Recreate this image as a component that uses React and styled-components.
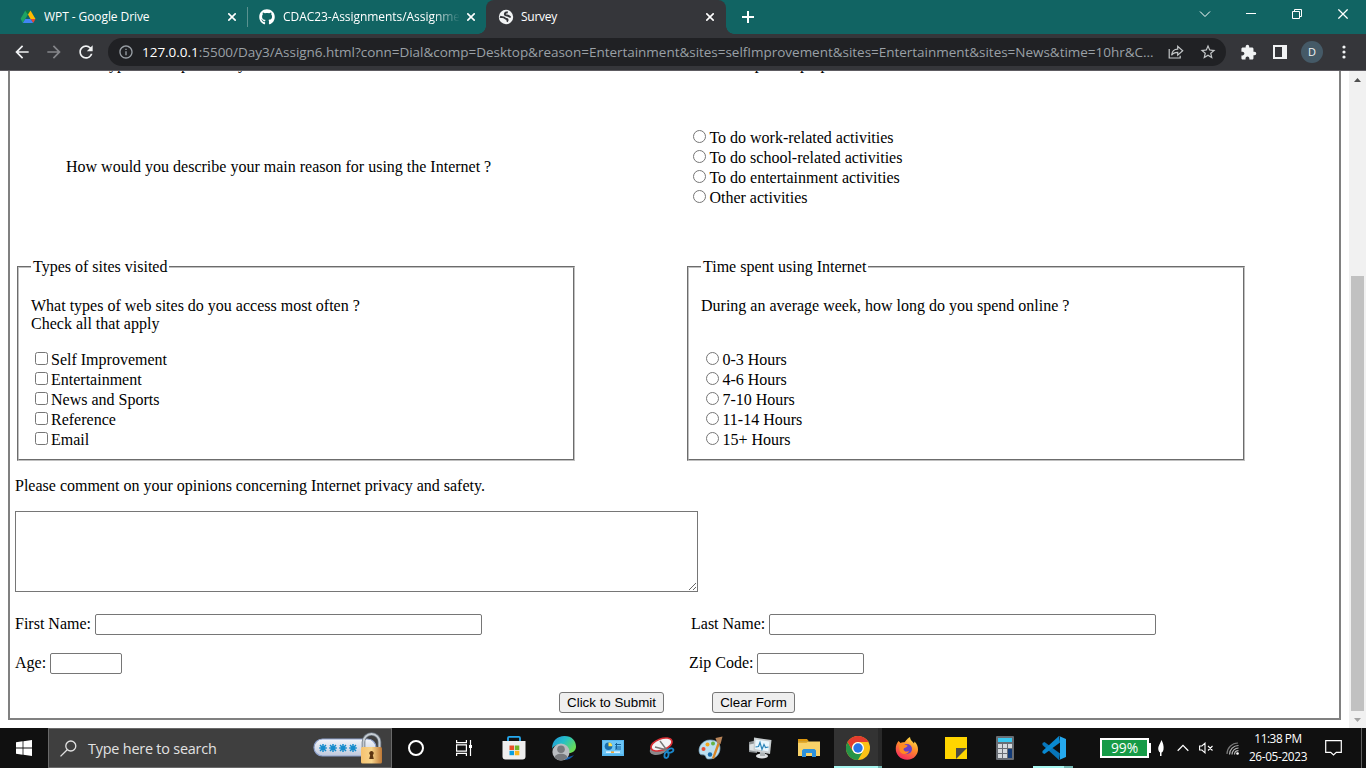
import React from "react";
import styled, { createGlobalStyle } from "styled-components";
import { FaGithub } from "react-icons/fa";
import { MdArrowBack, MdArrowForward, MdRefresh, MdExtension, MdStarBorder, MdInfoOutline } from "react-icons/md";

const Global = createGlobalStyle`
  * { box-sizing: border-box; }
  body { margin: 0; background: #fff; overflow: hidden; }
  svg { display: block; flex: none; }
`;

const ui = `"Open Sans", "Noto Sans", sans-serif`;

const Screen = styled.div`
  width: 1366px;
  height: 768px;
  display: flex;
  flex-direction: column;
  overflow: hidden;
`;

/* ---------- browser tabs ---------- */
const TabStrip = styled.div`
  height: 34px;
  flex: none;
  display: flex;
  background: #116463;
  color: #fff;
  font: 12px/34px ${ui};
`;
const Tab = styled.div`
  width: ${(p) => p.$w}px;
  padding: 0 ${(p) => p.$right}px 0 ${(p) => p.$left}px;
  display: flex;
  align-items: center;
  gap: ${(p) => p.$gap || 8}px;
  position: relative;
  background: ${(p) => (p.$active ? "#35363a" : "transparent")};
  border-radius: 8px 8px 0 0;
  &::before, &::after {
    content: ${(p) => (p.$active ? '""' : "none")};
    position: absolute;
    bottom: 0;
    width: 8px;
    height: 8px;
  }
  &::before { left: -8px; background: radial-gradient(circle at 0 0, transparent 7.5px, #35363a 8px); }
  &::after { right: -8px; background: radial-gradient(circle at 100% 0, transparent 7.5px, #35363a 8px); }
`;
const TabTitle = styled.span`
  flex: 1;
  min-width: 0;
  overflow: hidden;
  white-space: nowrap;
  letter-spacing: ${(p) => p.$ls || 0}px;
  ${(p) => p.$fade && "mask-image: linear-gradient(90deg, #000 150px, transparent 177px);"}
`;
const TabDivider = styled.i`
  width: 1px;
  height: 20px;
  margin: 7px 0;
  background: #5a9290;
`;
const NewTab = styled.div`
  padding: 11px 0 0 16px;
  flex: 1;
`;
const WindowControls = styled.div`
  display: flex;
  width: 184px;
  height: 28px;
`;
const WindowButton = styled.div`
  width: 46px;
  display: grid;
  place-items: center;
`;

/* ---------- toolbar ---------- */
const Toolbar = styled.div`
  height: 37px;
  flex: none;
  display: flex;
  align-items: center;
  padding: 0 6px 0 12px;
  background: #35363a;
  border-bottom: 1px solid #5d5b61;
  color: #f1f3f4;
`;
const NavButton = styled.div`
  width: 20px;
  flex: none;
  margin-right: 12px;
  display: grid;
  place-items: center;
  color: ${(p) => (p.$dim ? "#85868a" : "#f1f3f4")};
`;
const AddressBar = styled.div`
  width: 1118px;
  flex: none;
  height: 28px;
  margin-right: 6px;
  border-radius: 14px;
  background: #202124;
  display: flex;
  align-items: center;
  padding: 0 2px 0 10px;
  color: #c4c7c9;
`;
const Url = styled.span`
  width: 1018px;
  flex: none;
  margin-left: 8px;
  white-space: nowrap;
  overflow: hidden;
  color: #9aa0a6;
  font: 13.5px/26px ${ui};
  letter-spacing: -0.026px;
  b { font-weight: 400; color: #fff; }
`;
const ToolItem = styled.div`
  width: 32px;
  flex: none;
  display: grid;
  place-items: center;
`;
const Avatar = styled.div`
  width: 22px;
  height: 22px;
  border-radius: 50%;
  background: #455a67;
  text-align: center;
  font: 11px/22px ${ui};
`;

/* ---------- page ---------- */
const Viewport = styled.div`
  height: 657px;
  flex: none;
  display: flex;
  overflow: hidden;
  padding-left: 8px;
  background: #fff;
`;
const Form = styled.form`
  width: 1333px;
  height: 649px;
  margin-right: 8px;
  padding: 0 5px;
  border: 2px solid gray;
  border-top: 0;
  color: #000;
  font: 16px/18px "Liberation Serif", serif;
  input, button, textarea { font: 13.333px "Liberation Sans", sans-serif; }
`;
const Row = styled.div`
  display: flex;
  height: ${(p) => p.$h}px;
  margin-top: ${(p) => p.$mt || 0}px;
`;
const Question = styled.div`
  width: ${(p) => p.$w || 627}px;
  flex: none;
  align-self: ${(p) => p.$align || "flex-start"};
  padding-left: 51px;
  padding-bottom: ${(p) => (p.$align ? 2 : 0)}px;
`;
const Options = styled.div`
  padding-left: ${(p) => p.$pad}px;
  display: flex;
  flex-direction: ${(p) => (p.$inline ? "row" : "column")};
  gap: ${(p) => (p.$inline ? 4 : 0)}px;
  margin-top: ${(p) => (p.$inline ? -1 : 0)}px;
`;
const Option = styled.label`
  height: 20px;
  display: flex;
  align-items: flex-start;
  line-height: 20px;
  gap: ${(p) => p.$gap}px;
  input { width: 13px; height: 13px; margin: 2px 0 0; flex: none; }
`;
const Group = styled.fieldset`
  width: 558px;
  height: 203px;
  margin: 0 ${(p) => p.$mr || 0}px 0 2px;
  padding: 5.6px 12px 8px;
  border: 2px groove #c0c0c0;
  min-width: 0;
  legend { padding: 0 2px; }
  p { margin: 15px 0 17px; height: 36px; }
`;
const Comment = styled.textarea`
  display: block;
  width: 683px;
  height: 81px;
  margin: 16px 0 0;
  border: 1px solid #767676;
`;
const Field = styled.label`
  width: ${(p) => p.$w || 600}px;
  display: flex;
  gap: 4px;
  line-height: 20px;
  white-space: nowrap;
  input {
    width: ${(p) => p.$input}px;
    height: 21px;
    border: 1px solid #767676;
    border-radius: 2px;
    margin: 0;
    padding: 1px 2px;
  }
`;
const Button = styled.button`
  width: ${(p) => p.$w}px;
  height: 21px;
  padding: 0;
  white-space: nowrap;
  border: 1px solid #767676;
  border-radius: 3px;
  background: #efefef;
  color: #000;
`;
const Buttons = styled(Row)`
  gap: 48px;
  padding-left: 544px;
`;
const Scrollbar = styled.div`
  width: 17px;
  height: 657px;
  display: flex;
  flex-direction: column;
  align-items: center;
  background: #f1f1f1;
`;
const ScrollArrow = styled.div`
  height: 17px;
  display: grid;
  place-items: center;
`;
const Thumb = styled.div`
  width: 13px;
  height: 435px;
  margin-top: 188px;
  background: #c1c1c1;
`;

/* ---------- taskbar ---------- */
const Taskbar = styled.div`
  height: 40px;
  flex: none;
  display: flex;
  background: #101010;
  color: #fff;
  font-family: ${ui};
`;
const Slot = styled.div`
  width: ${(p) => p.$w || 49}px;
  height: 40px;
  flex: none;
  display: grid;
  place-items: center;
`;
const SearchBox = styled.div`
  width: 344px;
  height: 40px;
  flex: none;
  display: flex;
  align-items: center;
  padding: 0 8px 0 11px;
  background: #3f3f3f;
  border: 1px solid #696969;
  color: #e2e2e2;
  font-size: 14.4px;
  letter-spacing: -0.2px;
  span { margin: 0 0 0 11px; flex: 1; }
`;
const RunningSlot = styled(Slot)`
  background: ${(p) => (p.$active ? "linear-gradient(90deg, #333 44px, #292929 44px)" : "transparent")};
  position: relative;
  &::after {
    content: "";
    position: absolute;
    left: ${(p) => (p.$active ? 0 : 4)}px;
    right: ${(p) => (p.$active ? 0 : 5)}px;
    bottom: 0;
    height: 2px;
    background: linear-gradient(90deg, #a6f5ef ${(p) => (p.$active ? 44 : 31)}px, #72b5b0 ${(p) => (p.$active ? 44 : 31)}px);
  }
`;
const Battery = styled.div`
  width: 49px;
  flex: none;
  height: 20px;
  margin: 10px 0 0;
  border: 2px solid #fff;
  background: #169b47;
  position: relative;
  text-align: center;
  font-size: 13.8px;
  line-height: 16px;
  &::after {
    content: "";
    position: absolute;
    right: -4px;
    top: 3px;
    width: 2px;
    height: 10px;
    background: #fff;
  }
`;
const Clock = styled.div`
  width: 66px;
  flex: none;
  padding-top: 1px;
  text-align: center;
  font-size: 11.8px;
  line-height: 18px;
  white-space: nowrap;
  div:first-child { letter-spacing: -0.45px; }
  div:last-child { letter-spacing: -0.35px; }
`;
const DesktopEdge = styled.i`
  width: 1px;
  margin-left: 6px;
  background: #5f5f5f;
`;

const Cross = ({ s = 8, w = 1.6 }) => (
  <svg width={s} height={s} viewBox="0 0 8 8" stroke="#fff" strokeWidth={w}><path d="M.3.3l7.4 7.4M7.7.3L.3 7.7" /></svg>
);

const GlobeIcon = () => (
  <svg width="16" height="16" viewBox="0 0 16 16">
    <circle cx="8" cy="8" r="7.2" fill="#f1f3f4" />
    <path d="M9.8 3.200C8.500 3.200 7.200 3.500 6.900 4.700c-.300 1.300.700 1.700 2.100 1.800 1.800.100 2.300 1.300 3.700 1.600M2 7.600c1.200.700 3 .300 4 .900 1 .600 1.200 1.300 2.600 1.500 1.300.200 1.300 1.400.300 2.700" fill="none" stroke="#35363a" strokeWidth="1.900" />
  </svg>
);

const DriveIcon = () => (
  <svg width="16" height="16" viewBox="0 0 16 16">
    <path d="M5.3 1.4L.6 9.8l2.2 4.2L8 5.5z" fill="#1ea362" />
    <path d="M5.3 1.4h5.2L8 5.6z" fill="#117a3c" />
    <path d="M10.5 1.4l5 8.7h-5L8 5.5z" fill="#ffba00" />
    <path d="M10.5 10.1h5L13.2 14z" fill="#ea4335" />
    <path d="M5.3 10.1h5.2l2.7 3.9H2.8z" fill="#4285f4" />
  </svg>
);

const ShareIcon = () => (
  <svg width="16" height="16" viewBox="0 0 16 16" fill="none" stroke="#c4c7c9" strokeWidth="1.2">
    <path d="M1.2 5v9h11v-2.2M3.6 11.2c.5-4.2 2.7-6 6.1-6V2.3l5 4.5-5 4.4V8.3c-2.7 0-4.7.7-6.1 2.9z" />
  </svg>
);

const LockArt = () => (
  <svg width="70" height="34" viewBox="0 0 70 34">
    <defs>
      <linearGradient id="pill" x2="0" y2="1"><stop stopColor="#f4f6fa" /><stop offset="1" stopColor="#bfc9dd" /></linearGradient>
      <linearGradient id="lock"><stop stopColor="#f5c270" /><stop offset=".5" stopColor="#f8d48a" /><stop offset="1" stopColor="#bd7836" /></linearGradient>
    </defs>
    <rect x="1" y="8" width="62" height="17" rx="8.5" fill="url(#pill)" stroke="#8ca0cb" strokeWidth="1.2" />
    {[10, 20, 30, 40].map((x) => (
      <path key={x} d={`M${x} 13v8M${x - 3} 14l6 6M${x - 3} 20l6-6M${x - 3.8} 17h7.6`} stroke="#168ccc" strokeWidth="1.5" />
    ))}
    <path d="M50.5 17v-6a8 8 0 0 1 16 0v6" fill="none" stroke="#68717c" strokeWidth="3.6" />
    <path d="M50.5 17v-6a8 8 0 0 1 16 0v6" fill="none" stroke="#c5ccd2" strokeWidth="2" />
    <rect x="48" y="16" width="21" height="16.500" rx="1.5" fill="url(#lock)" />
    <path d="M58.5 20a2.2 2.2 0 0 1 1.3 4l1 4h-4.6l1-4a2.2 2.2 0 0 1 1.3-4z" fill="#5b3412" />
  </svg>
);

const TaskViewIcon = () => (
  <svg width="18" height="16" viewBox="0 0 18 16" fill="none" stroke="#fff" strokeWidth="1.2">
    <path d="M1.6 0v2.6h9.8V0M1.6 16v-2.6h9.8V16M1.6 4.8h9.8v6.4H1.6zM15.5 0v16" />
    <path d="M14 5h3v3h-3z" fill="#fff" stroke="none" />
  </svg>
);

const StoreIcon = () => (
  <svg width="24" height="26" viewBox="0 0 24 26">
    <path d="M6 6V3Q6 1.800 7.200 1.800h9.600Q18 1.800 18 3V6" fill="none" stroke="#25a9ef" strokeWidth="1.8" />
    <path d="M.5 6h23v15.5a3 3 0 0 1-3 3h-17a3 3 0 0 1-3-3z" fill="#eeeeee" />
    <path d="M7.5 10.5H12V15H7.5z" fill="#e95028" /><path d="M12.8 10.5h4.5V15h-4.5z" fill="#73b528" />
    <path d="M7.5 15.8H12v4.4H7.5z" fill="#0a9ede" /><path d="M12.8 15.8h4.5v4.4h-4.5z" fill="#f9b51b" />
  </svg>
);

const EdgeIcon = () => (
  <svg width="26" height="26" viewBox="0 0 26 26">
    <defs>
      <linearGradient id="edge" x2="1" y2=".6"><stop stopColor="#1f8fdc" /><stop offset=".5" stopColor="#25bfc7" /><stop offset="1" stopColor="#69dc55" /></linearGradient>
    </defs>
    <path d="M1 14C1 6 6 1 13.5 1S25 6 25 11.500c0 4-3 6.500-7 6.500-3 0-4-1-4-2 1-1 1-5-3-6-5-1-9 1-10 4z" fill="url(#edge)" />
    <path d="M11 19c2 3 7 4 12 1-2 3-6 5-10 5-3 0-5-1-7-3z" fill="#125ba8" />
    <circle cx="10" cy="17" r="8.6" fill="#b9bcc0" />
    <circle cx="10" cy="14.3" r="3.8" fill="#77797d" /><path d="M3.8 22.500c0-5 12.400-5 12.400 0-3.500 4-9 4-12.400 0z" fill="#77797d" />
  </svg>
);

const PanelIcon = () => (
  <svg width="22" height="16" viewBox="0 0 22 16">
    <path d="M0 0h22v16H0z" fill="#55b6ee" /><path d="M1 1h20v13H1z" fill="#6cc5f6" />
    <circle cx="6.500" cy="6.200" r="3.800" fill="#176dac" /><path d="M6.500 6.200V2.400a3.800 3.800 0 0 1 3.800 3.800z" fill="#ffe04d" />
    <path d="M13 4.500h6M13 7h6M13 9h6M14.500 3v6" stroke="#14639c" /><path d="M4 12.200h5m3 0h6" stroke="#fff" strokeWidth="1.3" /><path d="M9 12.200h3" stroke="#f5a936" strokeWidth="1.6" />
  </svg>
);

const SnipIcon = () => (
  <svg width="26" height="24" viewBox="0 0 26 24" fill="none">
    <ellipse cx="10" cy="13" rx="9.500" ry="5.500" transform="rotate(-18 10 13)" fill="#89898d" />
    <ellipse cx="12.500" cy="8.500" rx="11" ry="5.700" transform="rotate(-20 12.500 8.500)" fill="#f3f3f5" stroke="#d92f35" strokeWidth="1.600" />
    <path d="M11 5l7.500 10M6 11l12 3" stroke="#777" strokeWidth="1.400" />
    <ellipse cx="21.500" cy="14.500" rx="3" ry="1.900" transform="rotate(-20 21.500 14.500)" stroke="#1b87cb" strokeWidth="1.800" />
    <ellipse cx="17.500" cy="19" rx="2" ry="3" transform="rotate(12 17.500 19)" stroke="#1b87cb" strokeWidth="1.800" />
  </svg>
);

const PaintIcon = () => (
  <svg width="26" height="26" viewBox="0 0 26 26">
    <path d="M12 5C4 5-.500 13 1.500 18c1.300 3 4 1 5.500 2.500S7.500 24 11 24c7 0 11-5 11-11 0-5-4-8-10-8z" fill="#bcdff0" stroke="#7eacc8" strokeWidth=".700" />
    <circle cx="5.500" cy="14" r="2" fill="#e84c32" /><circle cx="9.500" cy="9.500" r="2" fill="#f3a71e" /><circle cx="15" cy="8.500" r="2" fill="#64b345" /><circle cx="12" cy="19.500" r="2.200" fill="#176db0" />
    <path d="M14 23l5.500-15 2.300 1L16 24z" fill="#d98424" /><path d="M19.300 8.200L17.500 3l7-1.500-2 7.500z" fill="#b78358" />
  </svg>
);

const MonitorIcon = () => (
  <svg width="24" height="22" viewBox="0 0 24 22">
    <path d="M1 5l8-2v13l-8-1z" fill="#8d9295" /><path d="M1.500 7.500l5-1v7.500l-5-.700z" fill="#dde2e4" />
    <ellipse cx="14" cy="19" rx="6" ry="2.500" fill="#dfe2e4" /><path d="M12 14h5v5h-5z" fill="#aeb4b7" />
    <path d="M6 .500L23.500 3 22 17 5.500 14z" fill="#c8cdcf" /><path d="M7.500 2.500L21.500 4.400 20.400 14.500 7 12z" fill="#e9f6fd" />
    <path d="M7.500 10l3-.500 1.500-4 2 7 2-5 1.500 3 3-.500" fill="none" stroke="#2b84b8" strokeWidth="1.200" />
  </svg>
);

const ExplorerIcon = () => (
  <svg width="22" height="18" viewBox="0 0 22 18">
    <path d="M0 0h9l2 2.500H0z" fill="#dd970d" /><path d="M0 2.500h22V17H0z" fill="#f8d269" /><path d="M0 2.500h10L8.500 4H0z" fill="#e6ad2e" />
    <path d="M4 18v-6.500L5.500 10h11l1.500 1.500V18h-4v-4H8v4z" fill="#2d92dc" />
  </svg>
);

const ChromeIcon = () => (
  <svg width="24" height="24" viewBox="0 0 24 24">
    <circle cx="12" cy="12" r="12" fill="#fbc116" />
    <path d="M1.600 6l5.200 9A6 6 0 0 0 17.200 15L12 24A12 12 0 0 1 1.600 6z" fill="#269447" />
    <path d="M1.600 6A12 12 0 0 1 22.400 6H12a6 6 0 0 0-5.200 9z" fill="#e33b2e" />
    <circle cx="12" cy="12" r="6" fill="#fff" /><circle cx="12" cy="12" r="4.700" fill="#2774e7" />
  </svg>
);

const FirefoxIcon = () => (
  <svg width="24" height="25" viewBox="0 0 24 25">
    <defs><linearGradient id="fox" x1=".8" y1="0" x2=".3" y2="1"><stop stopColor="#ffe94c" /><stop offset=".45" stopColor="#ff8c2a" /><stop offset="1" stopColor="#f52661" /></linearGradient></defs>
    <path d="M3.500 5c.800.500 1.400 1.200 2 2 1-.700 2.500-1 4-.700C11 5 11.500 3 15 1c.200 3 2 4 4 6.500l.500-2C24 10 24 16 20.500 20c-4 5-12.500 5-17 0C-.500 15.500.200 9 3.500 5z" fill="url(#fox)" />
    <circle cx="12" cy="13" r="5" fill="#6940c8" />
    <path d="M4 9c3-1.500 6 0 8.500.500 0 2-3 2-4 3.500 0 2 2.500 3.500 5.500 2-1 4-9 4-9.500-1z" fill="#ff8a22" />
  </svg>
);

const NoteIcon = () => (
  <svg width="22" height="22" viewBox="0 0 22 22">
    <path d="M0 0h22v22H0z" fill="#ffd500" />
    <path d="M11 11h11L11 22z" fill="#4b4a46" />
  </svg>
);

const CalcIcon = () => (
  <svg width="18" height="24" viewBox="0 0 18 24">
    <rect width="18" height="24" rx="1" fill="#686d74" /><path d="M2 2h14v4H2z" fill="#39c7ef" />
    {[8, 13, 18].map((y) => [2, 7, 12].map((x) => <path key={`${x}-${y}`} d={`M${x} ${y}h4v4h-4z`} fill="#d5d9dd" />))}
    <path d="M12 13h4v9h-4z" fill="#123b78" />
  </svg>
);

const CodeIcon = () => (
  <svg width="24" height="24" viewBox="0 0 24 24">
    <path d="M17 24L.500 9V7l2-1L18 17.500z" fill="#0876bb" />
    <path d="M17 0L.500 15v2l2 1L18 6.500z" fill="#0989d1" />
    <path d="M17 0l7 3v18l-7 3c.700-.500 1-1 1-2V2c0-1-.300-1.500-1-2z" fill="#25a9ef" />
  </svg>
);

const reasons = ["To do work-related activities", "To do school-related activities", "To do entertainment activities", "Other activities"];
const sites = ["Self Improvement", "Entertainment", "News and Sports", "Reference", "Email"];
const hours = ["0-3 Hours", "4-6 Hours", "7-10 Hours", "11-14 Hours", "15+ Hours"];

const Choice = ({ type = "radio", name, children, gap = 3.4 }) => (
  <Option $gap={gap}><input type={type} name={name} />{children}</Option>
);

function Survey() {
  return (
    <Form>
      <Row $h={18} $mt={-16}>
        <Question>What type of computer do you have ?</Question>
        <Options $pad={51} $inline>
          <Choice name="comp">Desktop</Choice>
          <Choice name="comp">Laptop</Choice>
        </Options>
      </Row>
      <Row $h={80} $mt={55}>
        <Question $align="center">How would you describe your main reason for using the Internet ?</Question>
        <Options $pad={51}>{reasons.map((r) => <Choice key={r} name="reason">{r}</Choice>)}</Options>
      </Row>
      <Row $h={203} $mt={50}>
        <Group $mr={110}>
          <legend>Types of sites visited</legend>
          <p>What types of web sites do you access most often ?<br />Check all that apply</p>
          <Options $pad={4}>{sites.map((s) => <Choice key={s} type="checkbox" name="sites" gap={3}>{s}</Choice>)}</Options>
        </Group>
        <Group>
          <legend>Time spent using Internet</legend>
          <p>During an average week, how long do you spend online ?</p>
          <Options $pad={5}>{hours.map((h) => <Choice key={h} name="time">{h}</Choice>)}</Options>
        </Group>
      </Row>
      <Row $h={18} $mt={16}>Please comment on your opinions concerning Internet privacy and safety.</Row>
      <Comment />
      <Row $h={21} $mt={22}>
        <Field $w={676} $input={387}>First Name:<input /></Field>
        <Field $input={387}>Last Name:<input /></Field>
      </Row>
      <Row $h={21} $mt={18}>
        <Field $w={674} $input={72}>Age:<input /></Field>
        <Field $input={107}>Zip Code:<input /></Field>
      </Row>
      <Buttons $h={21} $mt={18}>
        <Button type="button" $w={105}>Click to Submit</Button>
        <Button type="button" $w={83}>Clear Form</Button>
      </Buttons>
    </Form>
  );
}

export default function App() {
  return (
    <Screen>
      <Global />
      <TabStrip>
        <Tab $w={247} $left={20} $right={11}>
          <DriveIcon /><TabTitle $ls={-0.08}>WPT - Google Drive</TabTitle><Cross />
        </Tab>
        <TabDivider />
        <Tab $w={238} $left={11} $right={11}>
          <FaGithub size={16} /><TabTitle $fade $ls={-0.05}>CDAC23-Assignments/Assignments</TabTitle><Cross />
        </Tab>
        <Tab $active $w={240} $left={12} $right={12} $gap={7}>
          <GlobeIcon /><TabTitle $ls={-0.25}>Survey</TabTitle><Cross />
        </Tab>
        <NewTab><svg width="12" height="12" stroke="#fff" strokeWidth="2"><path d="M0 6h12M6 0v12" /></svg></NewTab>
        <WindowControls>
          <WindowButton><svg width="12" height="8" fill="none" stroke="#fff"><path d="M1 1.500l5 5 5-5" /></svg></WindowButton>
          <WindowButton><svg width="10" height="2"><path d="M0 0h10v1H0z" fill="#fff" /></svg></WindowButton>
          <WindowButton><svg width="10" height="10" fill="none" stroke="#fff"><path d="M.500 2.500h7v7h-7zM2.500 2.500v-2h7v7h-2" /></svg></WindowButton>
          <WindowButton><Cross s={10} w={1} /></WindowButton>
        </WindowControls>
      </TabStrip>
      <Toolbar>
        <NavButton><MdArrowBack size={20} /></NavButton>
        <NavButton $dim><MdArrowForward size={20} /></NavButton>
        <NavButton><MdRefresh size={20} /></NavButton>
        <AddressBar>
          <MdInfoOutline size={16} color="#9aa0a6" />
          <Url><b>127.0.0.1</b>:5500/Day3/Assign6.html?conn=Dial&amp;comp=Desktop&amp;reason=Entertainment&amp;sites=selfImprovement&amp;sites=Entertainment&amp;sites=News&amp;time=10hr&amp;C...</Url>
          <ToolItem><ShareIcon /></ToolItem>
          <ToolItem><MdStarBorder size={18} /></ToolItem>
        </AddressBar>
        <ToolItem><MdExtension size={17} /></ToolItem>
        <ToolItem><svg width="14" height="14"><path d="M0 0h14v14H0z" fill="#f1f3f4" /><path d="M2 2h7v10H2z" fill="#35363a" /></svg></ToolItem>
        <ToolItem><Avatar>D</Avatar></ToolItem>
        <ToolItem><svg width="4" height="14" fill="#f1f3f4"><circle cx="2" cy="2" r="1.600" /><circle cx="2" cy="7" r="1.600" /><circle cx="2" cy="12" r="1.600" /></svg></ToolItem>
      </Toolbar>
      <Viewport>
        <Survey />
        <Scrollbar>
          <ScrollArrow><svg width="7" height="4"><path d="M0 4l3.500-4L7 4z" fill="#505050" /></svg></ScrollArrow>
          <Thumb />
          <ScrollArrow><svg width="7" height="4"><path d="M0 0l3.500 4L7 0z" fill="#a3a3a3" /></svg></ScrollArrow>
        </Scrollbar>
      </Viewport>
      <Taskbar>
        <Slot $w={48}><svg width="16" height="16" fill="#fff"><path d="M0 2.200l6.600-.900v6.300H0zM7.400 1.200L16 0v7.600H7.400zM0 8.400h6.600v6.300L0 13.800zM7.400 8.400H16V16l-8.600-1.200z" /></svg></Slot>
        <SearchBox>
          <svg width="17" height="17" fill="none" stroke="#e2e2e2" strokeWidth="1.300"><circle cx="10.800" cy="6" r="5" /><path d="M7.200 9.700L.500 16.400" /></svg>
          <span>Type here to search</span>
          <LockArt />
        </SearchBox>
        <Slot $w={48}><svg width="18" height="18" fill="none" stroke="#fff" strokeWidth="2"><circle cx="9" cy="9" r="7" /></svg></Slot>
        <Slot $w={48}><TaskViewIcon /></Slot>
        <Slot $w={52}><StoreIcon /></Slot>
        <Slot $w={48}><EdgeIcon /></Slot>
        <Slot><PanelIcon /></Slot>
        <Slot><SnipIcon /></Slot>
        <Slot><PaintIcon /></Slot>
        <Slot><MonitorIcon /></Slot>
        <Slot><ExplorerIcon /></Slot>
        <Slot $w={1} />
        <RunningSlot $active $w={48}><ChromeIcon /></RunningSlot>
        <Slot><FirefoxIcon /></Slot>
        <Slot><NoteIcon /></Slot>
        <Slot><CalcIcon /></Slot>
        <RunningSlot><CodeIcon /></RunningSlot>
        <Slot $w={22} />
        <Battery>99%</Battery>
        <Slot $w={24}><svg width="8" height="16" fill="#fff"><path d="M4.500 0C6 3 7 6 6.500 9.500 6 12 5 12.500 4 12.500S1.500 12 1.200 9C1 6 3 4 4.500 0zM3 12h1.500v4H3z" /></svg></Slot>
        <Slot $w={20}><svg width="12" height="8" fill="none" stroke="#fff" strokeWidth="1.300"><path d="M.700 6.700L6 1.400l5.300 5.300" /></svg></Slot>
        <Slot $w={26}><svg width="15" height="12" fill="none" stroke="#fff" strokeWidth="1.100"><path d="M.600 4h2.300L6 1.200v9.600L2.900 8H.600zM9 4l4.500 4.500M13.500 4L9 8.500" /></svg></Slot>
        <Slot $w={26}><svg width="13" height="13" fill="none" stroke="#b5b5b5" strokeWidth="1.200"><path d="M1 12A11 11 0 0 1 12 1" stroke="#777" /><path d="M3.500 12.500A9 9 0 0 1 12.500 3.500M6 12.500A6.500 6.500 0 0 1 12.500 6M8.500 12.500A4 4 0 0 1 12.500 8.700" /><circle cx="11.500" cy="11.500" r="1.300" fill="#fff" stroke="none" /></svg></Slot>
        <Clock><div>11:38 PM</div><div>26-05-2023</div></Clock>
        <Slot $w={44}><svg width="17" height="16" fill="none" stroke="#fff" strokeWidth="1.200"><path d="M.700.700h15.600v11.600h-5L8.500 15l-2.800-2.700h-5z" /></svg></Slot>
        <DesktopEdge />
      </Taskbar>
    </Screen>
  );
}
